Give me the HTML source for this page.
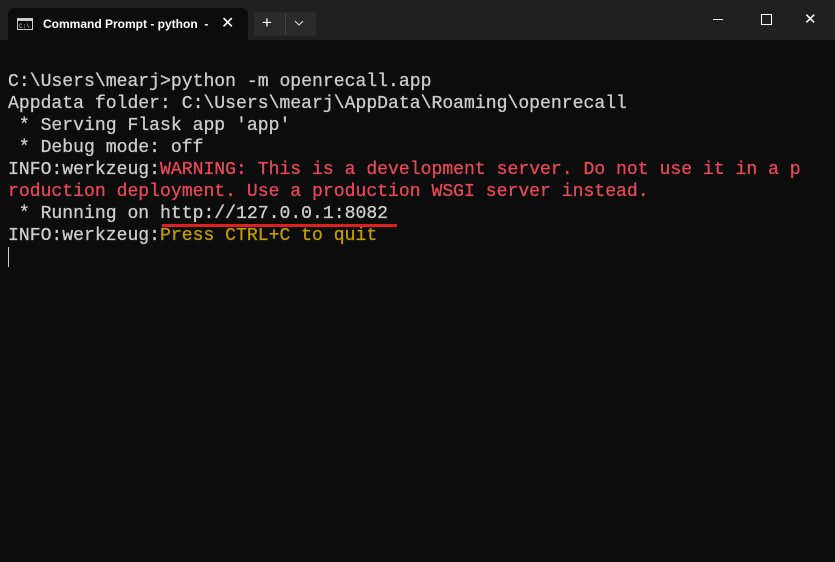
<!DOCTYPE html>
<html><head><style>
body{margin:0;width:835px;height:562px;background:#0c0c0c;overflow:hidden;position:relative;font-family:"Liberation Sans",sans-serif}
.bar{position:absolute;left:0;top:0;width:835px;height:40px;background:#202020}
.tab{position:absolute;left:8px;top:8px;width:240px;height:32px;background:#0c0c0c;border-radius:7px 7px 0 0}
.tt{position:absolute;left:43px;top:17px;color:#fff;font-size:12px;font-weight:bold}
.term{position:absolute;left:8px;top:71px;font-family:"Liberation Mono",monospace;font-size:18.1px;line-height:22px;color:#cccccc;white-space:pre;-webkit-text-stroke:0.3px currentColor}
.r{color:#e74856}.y{color:#c19c00}
.w{position:absolute;color:#fff;font-size:14px}
</style></head><body>
<div class="bar"></div>
<div class="tab"></div>
<svg style="position:absolute;left:17px;top:18px" width="16" height="12"><rect x="0.5" y="0.5" width="15" height="11" fill="none" stroke="#ccc"/><rect x="1" y="1" width="14" height="2" fill="#ccc"/><text x="2" y="10" font-size="6" fill="#ccc" font-family="Liberation Mono">C:\</text></svg>
<div class="tt">Command Prompt - python &nbsp;-</div>
<div class="w" style="left:221px;top:13px;font-size:16px">✕</div>
<div style="position:absolute;left:254px;top:12px;width:62px;height:24px;background:#2a2a2a;border-radius:4px"></div>
<div class="w" style="left:262px;top:13px;font-size:17px">+</div>
<div style="position:absolute;left:285px;top:14px;width:1px;height:20px;background:#444"></div>
<svg style="position:absolute;left:294px;top:20px" width="10" height="6"><path d="M1 1L5 5L9 1" stroke="#ddd" fill="none"/></svg>
<div style="position:absolute;left:713px;top:19px;width:10px;height:1px;background:#fff"></div>
<div style="position:absolute;left:761px;top:14px;width:9px;height:9px;border:1px solid #fff"></div>
<div class="w" style="left:804px;top:10px;font-size:15px">✕</div>
<div class="term">C:\Users\mearj>python -m openrecall.app
Appdata folder: C:\Users\mearj\AppData\Roaming\openrecall
 * Serving Flask app 'app'
 * Debug mode: off
INFO:werkzeug:<span class="r">WARNING: This is a development server. Do not use it in a p</span>
<span class="r">roduction deployment. Use a production WSGI server instead.</span>
 * Running on http://127.0.0.1:8082
INFO:werkzeug:<span class="y">Press CTRL+C to quit</span></div>
<div style="position:absolute;left:162px;top:224px;width:235px;height:3px;background:#e02020"></div>
<div style="position:absolute;left:8px;top:247px;width:1px;height:20px;background:#ccc"></div>
</body></html>
